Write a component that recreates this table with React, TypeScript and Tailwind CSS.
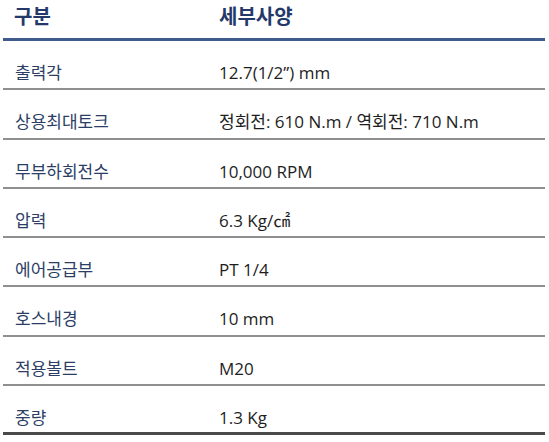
import React from "react";

const rows: [string, React.ReactNode][] = [
  ["출력각", "12.7(1/2”) mm"],
  ["상용최대토크", "정회전: 610 N.m / 역회전: 710 N.m"],
  ["무부하회전수", "10,000 RPM"],
  ["압력", "6.3 Kg/㎠"],
  ["에어공급부", "PT 1/4"],
  ["호스내경", "10 mm"],
  ["적용볼트", "M20"],
  ["중량", "1.3 Kg"],
];

export default function App() {
  return (
    <div
      className="w-[549px] h-[442px] bg-white pl-[3px] pr-[4px]"
      style={{ fontFamily: '"Open Sans", "Noto Sans CJK KR", sans-serif' }}
    >
      <div className="flex h-[41px] border-b-[3px] border-[#3f5b8c] pt-[3px] text-[20px] font-bold text-[#24396a] leading-[28px]">
        <div className="w-[216px] pl-[11px]">구분</div>
        <div>세부사양</div>
      </div>
      {rows.map(([k, v], i) => (
        <div
          key={k}
          className={
            "flex h-[49.25px] pt-[19px] text-[17px] leading-[25px] " +
            (i === rows.length - 1
              ? "border-b-[3px] border-[#4a4a4a]"
              : "border-b-2 border-[#8f8f8f]")
          }
        >
          <div className="w-[216px] pl-[12px] text-[#2c3e66]">{k}</div>
          <div className="text-[#1e1e1e]">{v}</div>
        </div>
      ))}
    </div>
  );
}
